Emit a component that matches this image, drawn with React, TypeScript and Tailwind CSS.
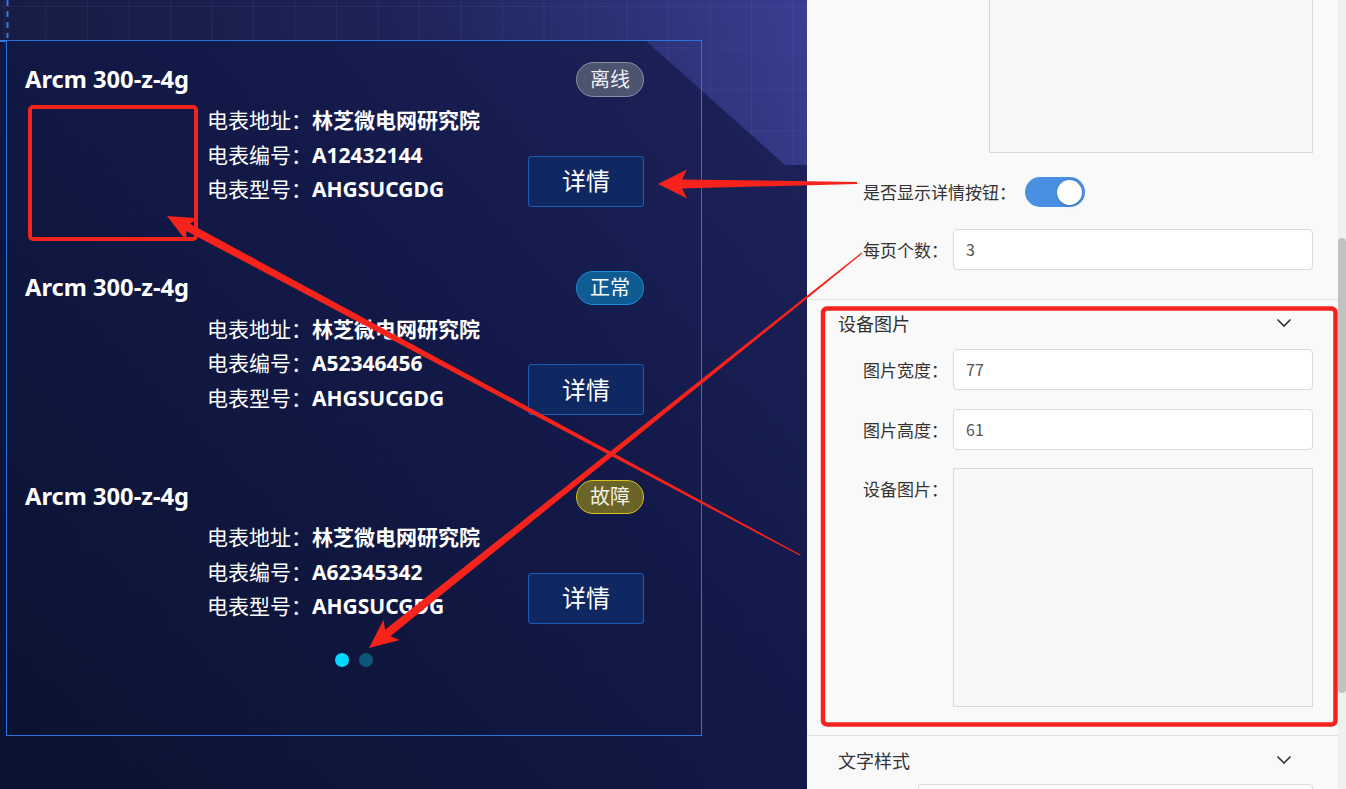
import React from 'react';

type Pt = [number, number];

// tapered red annotation arrow: thin at the tail, thick near the head
const arrowPoints = (
  tail: Pt,
  tip: Pt,
  wTail: number,
  wHead: number,
  headLen: number,
  headWidth: number,
  sweep: number
) => {
  const [tx, ty] = tail;
  const [hx, hy] = tip;
  const L = Math.hypot(hx - tx, hy - ty);
  const ux = (hx - tx) / L;
  const uy = (hy - ty) / L;
  const nx = -uy;
  const ny = ux;
  const bx = hx - ux * headLen;
  const by = hy - uy * headLen;
  const cx = bx - ux * sweep;
  const cy = by - uy * sweep;
  const pts: Pt[] = [
    [tx + (nx * wTail) / 2, ty + (ny * wTail) / 2],
    [bx + (nx * wHead) / 2, by + (ny * wHead) / 2],
    [cx + (nx * headWidth) / 2, cy + (ny * headWidth) / 2],
    [hx, hy],
    [cx - (nx * headWidth) / 2, cy - (ny * headWidth) / 2],
    [bx - (nx * wHead) / 2, by - (ny * wHead) / 2],
    [tx - (nx * wTail) / 2, ty - (ny * wTail) / 2],
  ];
  return pts.map((p) => `${p[0].toFixed(1)},${p[1].toFixed(1)}`).join(' ');
};

const meters = [
  { id: 1, status: 'offline', no: 'A12432144' },
  { id: 2, status: 'normal', no: 'A52346456' },
  { id: 3, status: 'fault', no: 'A62345342' },
];

const StatusBadge: React.FC<{ status: string }> = ({ status }) => {
  if (status === 'offline')
    return (
      <span className="h-[35px] px-[13px] rounded-full border border-[#8790a6] bg-[#4c5570] text-[#eef0f5] text-[20px] leading-[33px]">
        离线
      </span>
    );
  if (status === 'normal')
    return (
      <span className="h-[34px] px-[13px] rounded-full border border-[#1b8ed8] bg-[#0f5c95] text-white text-[20px] leading-[32px]">
        正常
      </span>
    );
  return (
    <span className="h-[34px] px-[13px] rounded-full border border-[#d8c31c] bg-[#6b6428] text-[#f3f1e2] text-[20px] leading-[32px]">
      故障
    </span>
  );
};

const Background: React.FC = () => (
  <svg className="absolute inset-0" width="807" height="789">
    <defs>
      <linearGradient id="base" x1="0" y1="0.4" x2="1" y2="0">
        <stop offset="0" stopColor="#141a3e" />
        <stop offset="0.55" stopColor="#1d2356" />
        <stop offset="1" stopColor="#393e92" />
      </linearGradient>
      <linearGradient id="dark" x1="0" y1="1" x2="1" y2="0">
        <stop offset="0" stopColor="#0a1230" />
        <stop offset="0.6" stopColor="#121948" />
        <stop offset="1" stopColor="#1c2157" />
      </linearGradient>
      <pattern id="grid" width="41.5" height="41.5" x="5" y="7" patternUnits="userSpaceOnUse">
        <path d="M41.5 0V41.5M0 41.5H41.5" stroke="#6f7ad0" strokeOpacity="0.22" strokeWidth="1" fill="none" />
      </pattern>
    </defs>
    <rect width="807" height="789" fill="url(#base)" />
    <rect width="807" height="789" fill="url(#grid)" />
    <polygon points="0,40 645,40 785,165 807,165 807,789 0,789" fill="url(#dark)" opacity="0.93" />
    <line x1="7.5" y1="0" x2="7.5" y2="38" stroke="#3a7ad8" strokeWidth="2" strokeDasharray="6 5" />
    <line x1="0" y1="41" x2="7" y2="41" stroke="#3a7ad8" strokeWidth="2" />
  </svg>
);

const MeterItem: React.FC<{ status: string; no: string }> = ({ status, no }) => (
  <div className="flex flex-col">
    <div className="h-[35px] flex items-center justify-between">
      <span className="text-[23.7px] font-bold text-white">Arcm 300-z-4g</span>
      <StatusBadge status={status} />
    </div>
    <div className="mt-[6px] flex items-end">
      <div className="w-[182px] shrink-0" />
      <div className="flex-1 text-[21px] leading-[34.5px] text-white">
        <div>
          电表地址：<span className="font-bold">林芝微电网研究院</span>
        </div>
        <div>
          电表编号：<span className="font-bold">{no}</span>
        </div>
        <div>
          电表型号：<span className="font-bold">AHGSUCGDG</span>
        </div>
      </div>
      <button className="w-[116px] h-[51px] rounded-[3px] border border-[#1d5cb4] bg-[#0f2862] text-white text-[24px]">
        详情
      </button>
    </div>
  </div>
);

const Field: React.FC<{ label: string; value: string; top: string }> = ({ label, value, top }) => (
  <div className={`flex items-center pl-[56px] pr-[25px] ${top}`}>
    <span className="w-[90px] shrink-0 text-[17px] text-[#333]">{label}</span>
    <div className="flex-1 h-[41px] rounded-[4px] border border-[#dadada] bg-white pl-[12px] text-[16px] leading-[39px] text-[#555]">
      {value}
    </div>
  </div>
);

const Chevron: React.FC = () => (
  <svg width="16" height="10" viewBox="0 0 16 10">
    <path d="M1.5 1.5 L8 8 L14.5 1.5" stroke="#333" strokeWidth="1.6" fill="none" />
  </svg>
);

const App: React.FC = () => {
  return (
    <div className="relative flex w-[1346px] h-[789px] overflow-hidden font-['Noto_Sans','Noto_Sans_CJK_SC',sans-serif]">
      {/* preview canvas */}
      <div className="relative w-[807px] h-[789px] shrink-0 overflow-hidden">
        <Background />
        <div className="relative ml-[6px] mt-[40px] w-[696px] h-[696px] border border-[#2a72dc] flex flex-col">
          <div className="pl-[18px] pr-[57px] pt-[21px] flex flex-col gap-[64px]">
            {meters.map((m) => (
              <MeterItem key={m.id} status={m.status} no={m.no} />
            ))}
          </div>
          <div className="mt-[29px] flex justify-center gap-[10px]">
            <span className="w-[14px] h-[14px] rounded-full bg-[#00d8ff]" />
            <span className="w-[14px] h-[14px] rounded-full bg-[#0d5878]" />
          </div>
        </div>
      </div>

      {/* config panel */}
      <div className="flex-1 flex bg-[#f9f9f9] font-['Noto_Sans_CJK_SC','Noto_Sans',sans-serif]">
        <div className="flex-1 flex flex-col">
          <div className="h-[153px] pl-[182px] pr-[25px]">
            <div className="-mt-[2px] h-[155px] border border-[#d9d9d9] bg-[#f8f8f8]" />
          </div>
          <div className="mt-[24px] h-[30px] flex items-center pl-[56px]">
            <span className="text-[17px] text-[#333]">是否显示详情按钮：</span>
            <div className="ml-[9px] w-[60px] h-[30px] rounded-full bg-[#4a90e2] flex items-center justify-end pr-[3px]">
              <span className="w-[25px] h-[25px] rounded-full bg-white shadow-[0_1px_3px_rgba(0,0,0,0.25)]" />
            </div>
          </div>
          <Field label="每页个数：" value="3" top="mt-[22px]" />

          <div className="mt-[29px] border-t border-[#e2e2e2] pb-[28px]">
            <div className="h-[46px] flex items-center justify-between pl-[31px] pr-[46px]">
              <span className="text-[18px] text-[#333]">设备图片</span>
              <Chevron />
            </div>
            <Field label="图片宽度：" value="77" top="mt-[3px]" />
            <Field label="图片高度：" value="61" top="mt-[19px]" />
            <div className="mt-[18px] flex items-start pl-[56px] pr-[25px]">
              <span className="w-[90px] shrink-0 h-[41px] leading-[41px] text-[17px] text-[#333]">设备图片：</span>
              <div className="flex-1 h-[239px] border border-[#d9d9d9] bg-[#f8f8f8]" />
            </div>
          </div>

          <div className="border-t border-[#e2e2e2]">
            <div className="h-[48px] flex items-center justify-between pl-[31px] pr-[46px]">
              <span className="text-[18px] text-[#333]">文字样式</span>
              <Chevron />
            </div>
            <div className="ml-[111px] mr-[25px] h-[41px] rounded-[4px] border border-[#dadada] bg-white" />
          </div>
        </div>
        {/* scrollbar */}
        <div className="w-[8px] bg-[#f0f0f0]">
          <div className="mt-[238px] h-[455px] rounded-full bg-[#c1c1c1]" />
        </div>
      </div>

      {/* red annotations */}
      <svg className="absolute inset-0 pointer-events-none" width="1346" height="789">
        <rect x="30" y="107" width="166" height="132" rx="3" fill="none" stroke="#f5231b" strokeWidth="4" />
        <rect x="823" y="308.5" width="512.5" height="416" rx="4" fill="none" stroke="#f5231b" strokeWidth="4.5" />
        <polygon points={arrowPoints([857, 183], [658, 184], 2, 9, 24, 29, 5)} fill="#f5231b" />
        <polygon points={arrowPoints([800, 555], [167, 216], 1.4, 8, 24, 26, 5)} fill="#f5231b" />
        <polygon points={arrowPoints([862, 253], [369, 648], 1.4, 8.5, 24, 26, 5)} fill="#f5231b" />
      </svg>
    </div>
  );
};

export default App;
